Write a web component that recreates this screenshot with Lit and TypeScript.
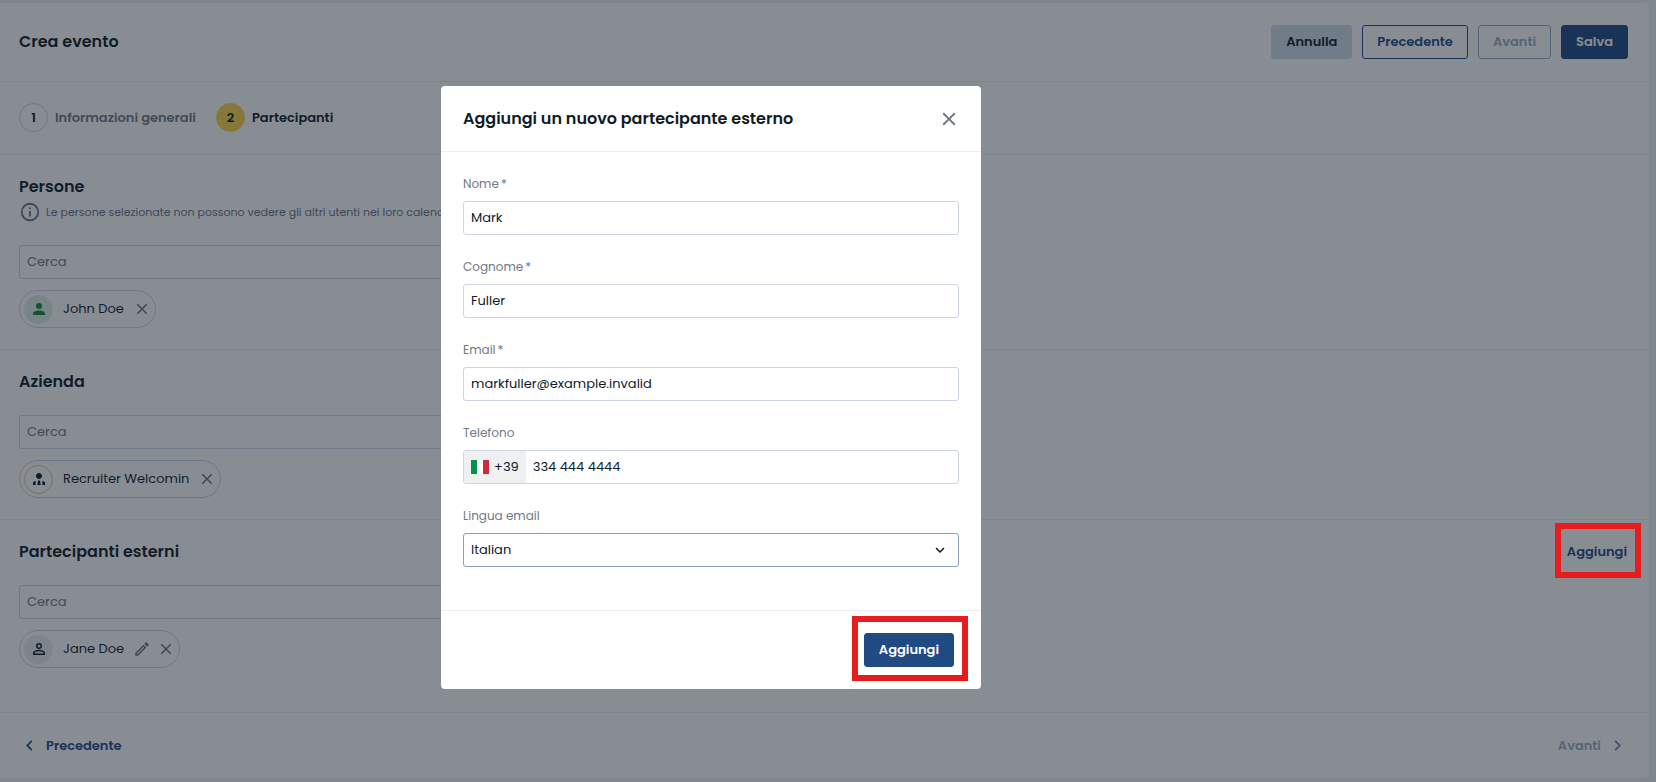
import { LitElement, html, css, svg, nothing } from "lit";
import { customElement, property } from "lit/decorators.js";

const ICONS: Record<string, string> = {
  close:
    "M19 6.41 17.59 5 12 10.59 6.41 5 5 6.41 10.59 12 5 17.59 6.41 19 12 13.41 17.59 19 19 17.59 13.41 12Z",
  info:
    "M11 9h2V7h-2m1 13c-4.41 0-8-3.59-8-8s3.59-8 8-8 8 3.59 8 8-3.59 8-8 8m0-18A10 10 0 0 0 2 12a10 10 0 0 0 10 10 10 10 0 0 0 10-10A10 10 0 0 0 12 2m-1 15h2v-6h-2v6Z",
  person:
    "M12 4a4 4 0 0 1 4 4 4 4 0 0 1-4 4 4 4 0 0 1-4-4 4 4 0 0 1 4-4m0 10c4.42 0 8 1.79 8 4v2H4v-2c0-2.21 3.58-4 8-4Z",
  tie:
    "M12 4c2.21 0 4 1.79 4 4s-1.79 4-4 4-4-1.79-4-4 1.79-4 4-4m4.5 10.2V20h-2.2l-1.1-5.9h-2.4L9.700 20H7.500v-5.800C5.400 14.800 4 15.900 4 17.300V20h16v-2.700c0-1.400-1.400-2.500-3.500-3.100ZM12 15l-1 4 1 1 1-1Z",
  personOutline:
    "M12 4a4 4 0 0 1 4 4 4 4 0 0 1-4 4 4 4 0 0 1-4-4 4 4 0 0 1 4-4m0 2a2 2 0 0 0-2 2 2 2 0 0 0 2 2 2 2 0 0 0 2-2 2 2 0 0 0-2-2m0 7c2.67 0 8 1.33 8 4v3H4v-3c0-2.67 5.33-4 8-4m0 1.9c-2.97 0-6.1 1.46-6.1 2.1v1.1h12.2V17c0-.64-3.13-2.1-6.1-2.1Z",
  pencil:
    "M14.06 9.02l.92.92L5.92 19H5v-.92l9.06-9.06M17.66 3c-.25 0-.51.1-.7.29l-1.83 1.83 3.75 3.75 1.83-1.83c.39-.39.39-1.04 0-1.41l-2.34-2.34c-.2-.2-.45-.29-.71-.29m-3.6 3.19L3 17.25V21h3.75L17.81 9.94l-3.75-3.75Z",
  left: "M15.41 16.58 10.83 12l4.58-4.59L14 6l-6 6 6 6 1.41-1.42Z",
  right: "M8.59 16.58 13.17 12 8.59 7.41 10 6l6 6-6 6-1.41-1.42Z",
  down: "M7.41 8.58 12 13.17l4.59-4.59L18 10l-6 6-6-6 1.41-1.42Z",
};

const icon = (name: string, size: number) => html`
  <svg class="icon" width=${size} height=${size} viewBox="0 0 24 24" aria-hidden="true">
    ${svg`<path d=${ICONS[name]} fill="currentColor"></path>`}
  </svg>
`;

const base = css`
  * {
    box-sizing: border-box;
  }
  button,
  input,
  select {
    font: inherit;
    color: inherit;
    margin: 0;
  }
  button {
    cursor: pointer;
  }
  .icon {
    display: block;
    flex: none;
  }
  .plain {
    display: flex;
    padding: 0;
    border: 0;
    background: none;
    color: #6b7384;
  }
`;

@customElement("person-chip")
export class PersonChip extends LitElement {
  @property() name = "";
  @property() kind = "person";
  @property({ type: Boolean }) editable = false;

  static styles = [
    base,
    css`
      :host {
        display: inline-flex;
        align-items: center;
        box-sizing: border-box;
        height: 38px;
        padding: 0 4px;
        border: 1px solid #cdd5e5;
        border-radius: 19px;
      }
      .avatar {
        display: flex;
        align-items: center;
        justify-content: center;
        width: 29px;
        height: 29px;
        border-radius: 50%;
      }
      .person {
        background: #ddefe3;
        color: #138a36;
      }
      .tie {
        border: 1px solid #f5b598;
        color: #111c29;
      }
      .personOutline {
        background: #e9edef;
        color: #111c29;
      }
      .name {
        margin: 0 9px 0 10px;
      }
      .actions {
        display: flex;
        gap: 6px;
      }
    `,
  ];

  render() {
    return html`
      <span class="avatar ${this.kind}">${icon(this.kind, 18)}</span>
      <span class="name">${this.name}</span>
      <span class="actions">
        ${this.editable
          ? html`<button class="plain" aria-label="Modifica">${icon("pencil", 18)}</button>`
          : nothing}
        <button class="plain" aria-label="Rimuovi">${icon("close", 18)}</button>
      </span>
    `;
  }
}

@customElement("app-root")
export class AppRoot extends LitElement {
  static styles = [
    base,
    css`
      :host {
        display: block;
        min-height: 100vh;
        overflow: hidden;
        background: #edf0f1;
        color: #111c29;
        font-family: Poppins, Inter, sans-serif;
        font-size: 13px;
        line-height: 20px;
      }
      h1,
      h2 {
        margin: 0;
        font-size: 16px;
        line-height: 24px;
        font-weight: 600;
      }
      .panel {
        margin: 3px 7px 4px 0;
        background: #fff;
        border-radius: 0 4px 4px 0;
      }
      .bar {
        display: flex;
        align-items: center;
        border-bottom: 1px solid #ebedf0;
      }
      .top {
        justify-content: space-between;
        padding: 22px 21px 22px 19px;
      }
      .buttons {
        display: flex;
        gap: 10px;
      }
      .btn {
        height: 34px;
        padding: 0 14px;
        border: 1px solid #1f4a82;
        border-radius: 3px;
        background: #fff;
        color: #1f4a82;
        font-weight: 600;
      }
      .muted {
        background: #d3dae7;
        border-color: #d3dae7;
        color: #111c29;
      }
      .off {
        border-color: #98abc7;
        color: #98abc7;
      }
      .primary {
        background: #1f4a82;
        color: #fff;
      }
      .steps {
        gap: 20px;
        margin: 0;
        padding: 21px 19px 22px;
        list-style: none;
      }
      .step {
        display: flex;
        align-items: center;
        gap: 7px;
        color: #6f7a86;
        font-weight: 600;
      }
      .num {
        display: flex;
        align-items: center;
        justify-content: center;
        width: 29px;
        height: 29px;
        border: 1px solid #cdd5e5;
        border-radius: 50%;
        color: #111c29;
      }
      .current {
        color: #111c29;
      }
      .current .num {
        background: #fcd549;
        border-color: #fcd549;
      }
      .section {
        padding: 20px 22px 21px 19px;
        border-bottom: 1px solid #ebedf0;
      }
      .external {
        padding-bottom: 44px;
      }
      .info {
        display: flex;
        align-items: center;
        gap: 5px;
        height: 25px;
        color: #6b7384;
        font-size: 11px;
      }
      .head {
        display: flex;
        align-items: center;
        justify-content: space-between;
      }
      .field {
        display: block;
        width: 100%;
        height: 34px;
        padding: 0 7px;
        border: 1px solid #cdd5e5;
        border-radius: 3px;
        background: #fff;
        outline: 0;
      }
      .field::placeholder {
        color: #6f7a86;
        opacity: 1;
      }
      .search {
        width: 50%;
        margin: 21px 0 11px;
      }
      person-chip {
        vertical-align: top;
      }
      .link {
        display: flex;
        align-items: center;
        gap: 6px;
        padding: 0;
        height: 24px;
        border: 0;
        background: none;
        color: #1f4a82;
        font-weight: 600;
      }
      .link.off {
        color: #98abc7;
      }
      .link.off .icon {
        color: #6f86ab;
      }
      .foot {
        display: flex;
        align-items: center;
        justify-content: space-between;
        height: 65px;
        padding: 0 21px 0 19px;
      }
      .marked {
        position: relative;
        display: flex;
      }
      .marked::after {
        content: "";
        position: absolute;
        z-index: 3;
        inset: -17px -14px -14px -12px;
        border: 6px solid #e81c1c;
        pointer-events: none;
      }
      .overlay {
        position: fixed;
        inset: 0;
        z-index: 2;
        display: flex;
        align-items: center;
        justify-content: center;
        padding: 0 234px 7px 0;
        background: rgba(17, 28, 41, 0.5);
      }
      .modal {
        width: 540px;
        border-radius: 4px;
        background: #fff;
      }
      .modal-head {
        justify-content: space-between;
        padding: 21px 21px 20px 22px;
      }
      .form {
        display: grid;
        gap: 21px;
        padding: 21px 22px 43px;
      }
      .row {
        display: grid;
        gap: 7px;
      }
      .row label {
        display: flex;
        gap: 2px;
        height: 21px;
        color: #6f7a86;
        font-size: 12px;
        line-height: 21px;
      }
      .phone {
        display: flex;
        padding: 0;
        overflow: hidden;
      }
      .prefix {
        display: flex;
        align-items: center;
        gap: 5px;
        padding: 0 7px;
        background: #eff0f2;
      }
      .tel {
        flex: 1;
        min-width: 0;
        padding: 0 7px;
        border: 0;
        outline: 0;
        background: none;
      }
      .select {
        display: grid;
        align-items: center;
      }
      .select > * {
        grid-area: 1 / 1;
      }
      .select .field {
        appearance: none;
        border-color: #89a0c0;
      }
      .select .icon {
        justify-self: end;
        margin-right: 10px;
        pointer-events: none;
      }
      .modal-foot {
        display: flex;
        justify-content: flex-end;
        padding: 22px 27px 22px 22px;
        border-top: 1px solid #ebedf0;
      }
    `,
  ];

  private row(id: string, label: string, value: string, type = "text") {
    return html`
      <div class="row">
        <label for=${id}>${label}<span>*</span></label>
        <input class="field" id=${id} type=${type} .value=${value} required />
      </div>
    `;
  }

  render() {
    return html`
      <main class="panel">
        <header class="bar top">
          <h1>Crea evento</h1>
          <div class="buttons">
            <button class="btn muted">Annulla</button>
            <button class="btn">Precedente</button>
            <button class="btn off">Avanti</button>
            <button class="btn primary">Salva</button>
          </div>
        </header>
        <ol class="bar steps">
          <li class="step"><span class="num">1</span>Informazioni generali</li>
          <li class="step current"><span class="num">2</span>Partecipanti</li>
        </ol>
        <section class="section">
          <h2>Persone</h2>
          <div class="info">
            ${icon("info", 22)}
            <span>Le persone selezionate non possono vedere gli altri utenti nei loro calendari</span>
          </div>
          <input class="field search" placeholder="Cerca" aria-label="Cerca persone" />
          <person-chip name="John Doe"></person-chip>
        </section>
        <section class="section">
          <h2>Azienda</h2>
          <input class="field search" placeholder="Cerca" aria-label="Cerca azienda" />
          <person-chip name="Recruiter Welcomin" kind="tie"></person-chip>
        </section>
        <section class="section external">
          <div class="head">
            <h2>Partecipanti esterni</h2>
            <span class="marked"><button class="link">Aggiungi</button></span>
          </div>
          <input class="field search" placeholder="Cerca" aria-label="Cerca partecipanti esterni" />
          <person-chip name="Jane Doe" kind="personOutline" editable></person-chip>
        </section>
        <footer class="foot">
          <button class="link">${icon("left", 21)}Precedente</button>
          <button class="link off">Avanti${icon("right", 21)}</button>
        </footer>
      </main>

      <div class="overlay">
        <div class="modal" role="dialog" aria-modal="true" aria-labelledby="title">
          <div class="bar modal-head">
            <h2 id="title">Aggiungi un nuovo partecipante esterno</h2>
            <button class="plain" aria-label="Chiudi">${icon("close", 22)}</button>
          </div>
          <form class="form">
            ${this.row("nome", "Nome", "Mark")}
            ${this.row("cognome", "Cognome", "Fuller")}
            ${this.row("email", "Email", "markfuller@example.invalid", "email")}
            <div class="row">
              <label for="tel">Telefono</label>
              <div class="field phone">
                <span class="prefix">
                  <svg class="icon" width="18" height="14" viewBox="0 0 18 14" aria-hidden="true">
                    <rect width="18" height="14" fill="#fff"></rect>
                    <rect width="6" height="14" fill="#009246"></rect>
                    <rect x="12" width="6" height="14" fill="#ce2b37"></rect>
                  </svg>
                  +39
                </span>
                <input class="tel" id="tel" type="tel" .value=${"334 444 4444"} />
              </div>
            </div>
            <div class="row">
              <label for="lingua">Lingua email</label>
              <div class="select">
                <select class="field" id="lingua">
                  <option>Italian</option>
                </select>
                ${icon("down", 18)}
              </div>
            </div>
          </form>
          <div class="modal-foot">
            <span class="marked"><button class="btn primary">Aggiungi</button></span>
          </div>
        </div>
      </div>
    `;
  }
}
